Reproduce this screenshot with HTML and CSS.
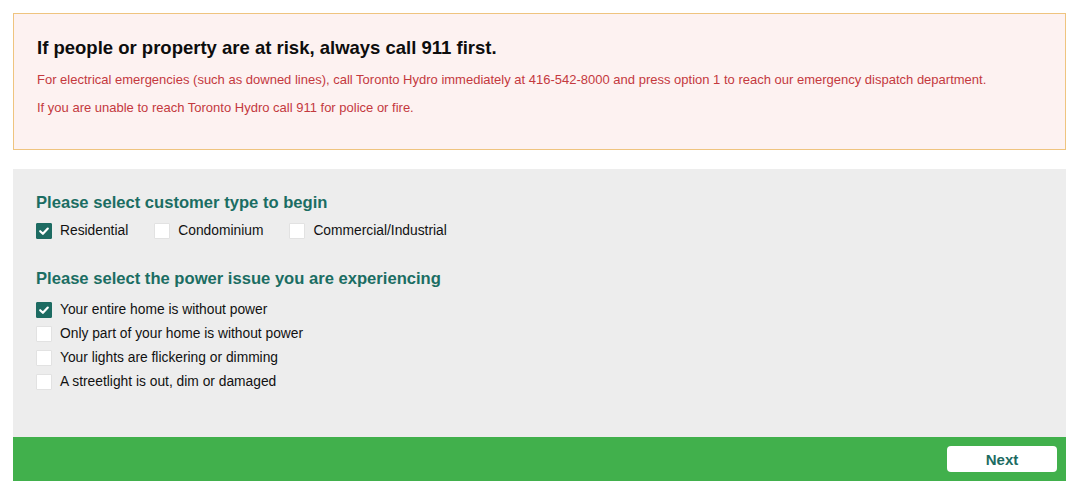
FILE: index.html
```html
<!DOCTYPE html>
<html lang="en">
<head>
<meta charset="utf-8">
<title>Power outage report</title>
<link rel="stylesheet" href="styles.css">
</head>
<body>
<div class="page">
  <section class="alert">
    <h1 class="alert-title">If people or property are at risk, always call 911 first.</h1>
    <p class="alert-text">For electrical emergencies (such as downed lines), call Toronto Hydro immediately at 416-542-8000 and press option 1 to reach our emergency dispatch department.</p>
    <p class="alert-text">If you are unable to reach Toronto Hydro call 911 for police or fire.</p>
  </section>

  <section class="form">
    <div class="form-body">
      <h2 class="form-heading">Please select customer type to begin</h2>
      <div class="choice-row">
        <label class="choice"><span class="box checked"><svg viewBox="0 0 16 16" width="16" height="16"><path d="M4.2 8.2 L6.9 10.8 L11.8 5.6" fill="none" stroke="#fff" stroke-width="2.2" stroke-linecap="round" stroke-linejoin="round"/></svg></span>Residential</label>
        <label class="choice"><span class="box"></span>Condominium</label>
        <label class="choice"><span class="box"></span>Commercial/Industrial</label>
      </div>

      <h2 class="form-heading second">Please select the power issue you are experiencing</h2>
      <div class="choice-list">
        <label class="choice"><span class="box checked"><svg viewBox="0 0 16 16" width="16" height="16"><path d="M4.2 8.2 L6.9 10.8 L11.8 5.6" fill="none" stroke="#fff" stroke-width="2.2" stroke-linecap="round" stroke-linejoin="round"/></svg></span>Your entire home is without power</label>
        <label class="choice"><span class="box"></span>Only part of your home is without power</label>
        <label class="choice"><span class="box"></span>Your lights are flickering or dimming</label>
        <label class="choice"><span class="box"></span>A streetlight is out, dim or damaged</label>
      </div>
    </div>
    <div class="form-footer">
      <button class="next-btn" type="button">Next</button>
    </div>
  </section>
</div>
</body>
</html>
```

FILE: styles.css
```css
* { box-sizing: border-box; }

html, body {
  margin: 0;
  padding: 0;
  background: #ffffff;
}

body {
  font-family: "Liberation Sans", Arial, Helvetica, sans-serif;
  color: #111;
}

.page {
  padding: 13px 14px 13px 13px;
  display: flex;
  flex-direction: column;
  gap: 19px;
}

.alert {
  background: #fdf2f1;
  border: 1px solid #efc47f;
  padding: 22px 23px 27px 23px;
}

.alert-title {
  margin: 0 0 6px 0;
  font-size: 18.5px;
  line-height: 24px;
  font-weight: bold;
  color: #0d0d0d;
}

.alert-text {
  margin: 0;
  font-size: 13px;
  line-height: 28px;
  color: #c4393e;
}

.form {
  display: flex;
  flex-direction: column;
}

.form-body {
  background: #ededed;
  padding: 23px 24px 47px 23px;
}

.form-heading {
  margin: 0;
  font-size: 16.6px;
  line-height: 22px;
  font-weight: bold;
  color: #1b6d63;
}

.form-heading.second {
  margin-top: 29px;
}

.choice-row {
  margin-top: 9px;
  display: flex;
  gap: 26px;
}

.choice-list {
  margin-top: 12px;
  display: flex;
  flex-direction: column;
  gap: 8px;
}

.choice {
  display: flex;
  align-items: center;
  gap: 8px;
  font-size: 13.8px;
  line-height: 16px;
  color: #111;
}

.box {
  width: 16px;
  height: 16px;
  flex: none;
  background: #ffffff;
  border: 1px solid #e2e2e2;
  border-radius: 1px;
  display: flex;
  align-items: center;
  justify-content: center;
}

.box.checked {
  background: #1d6b62;
  border-color: #1d6b62;
}

.box svg {
  display: block;
  flex: none;
}

.form-footer {
  background: #41b04c;
  height: 44px;
  display: flex;
  justify-content: flex-end;
  align-items: flex-start;
  padding: 9px 9px 0 0;
}

.next-btn {
  width: 110px;
  height: 26px;
  background: #ffffff;
  border: none;
  border-radius: 4px;
  font-family: "Liberation Sans", Arial, Helvetica, sans-serif;
  font-size: 15px;
  font-weight: bold;
  color: #1d6b62;
  padding: 0;
}
```
